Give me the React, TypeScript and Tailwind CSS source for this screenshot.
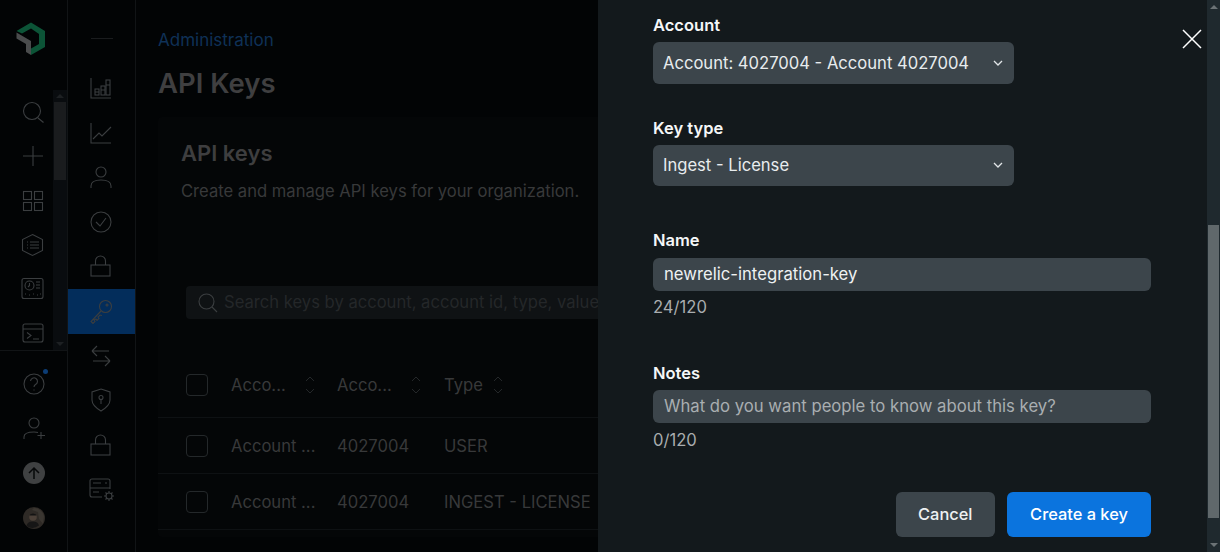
import React from "react";

const font = { fontFamily: "Inter, 'Liberation Sans', sans-serif" };

function Ico({ children, w = 28, h = 28 }: { children: React.ReactNode; w?: number; h?: number }) {
  return (
    <svg width={w} height={h} viewBox={`0 0 ${w} ${h}`} fill="none" stroke="currentColor" strokeWidth="1.1">
      {children}
    </svg>
  );
}

const railOne = [
  <Ico key="s"><circle cx="13" cy="13" r="8.500" /><path d="M19 20l5.500 4.500" /></Ico>,
  <Ico key="p"><path d="M14 4v20M4 14h20" /></Ico>,
  <Ico key="g"><rect x="4.500" y="4.500" width="8" height="8" /><rect x="15.500" y="4.500" width="8" height="8" /><rect x="4.500" y="15.500" width="8" height="8" /><rect x="15.500" y="15.500" width="8" height="8" /></Ico>,
  <Ico key="h"><path d="M13.500 3.500l10 5v11l-10 5-10-5v-11z" /><path d="M8 11h1M8 14h1M8 17h1M11 11h9M11 14h9M11 17h9" /></Ico>,
  <Ico key="d"><rect x="3" y="3.500" width="21" height="20" rx="2" /><circle cx="10.500" cy="10.500" r="4.500" /><path d="M10.500 8v2.500L9 12M17 7h4M17 10h4M17 13h4M6 19h1M10 20h1M14 19h1M18 20h1M21 19h1" /></Ico>,
  <Ico key="t"><rect x="4" y="4" width="20" height="18" rx="2" /><path d="M4 9h20M8 12.500l4 3-4 3M14 19h6" /></Ico>,
];

const railTwo = [
  <Ico key="b"><path d="M4 4v20h20" /><rect x="8" y="15" width="4" height="6" /><rect x="14" y="12" width="4" height="9" /><rect x="19" y="6" width="4" height="15" /><path d="M8 18h4M14 16h4M19 11h4" /></Ico>,
  <Ico key="l"><path d="M4 4v20h20M6 20l6-6 3 3 9-9" /></Ico>,
  <Ico key="u"><circle cx="14" cy="9" r="5" /><path d="M4 25v-2c0-4 4-6 10-6s10 2 10 6v2" /></Ico>,
  <Ico key="c"><circle cx="14" cy="14" r="10" /><path d="M9 14l4 4 6-8" /></Ico>,
  <Ico key="k"><rect x="4" y="13" width="19" height="11" /><path d="M8.500 13V9a5 5 0 0 1 10 0v4" /></Ico>,
];

const railTwoLow = [
  <Ico key="x"><path d="M5 9h17M5 9l5-5M5 9l5 5M23 19H6M23 19l-5-5M23 19l-5 5" /></Ico>,
  <Ico key="sh"><path d="M14 3l9 3v8c0 5-4 8-9 11-5-3-9-6-9-11V6z" /><circle cx="14" cy="11.500" r="2" /><path d="M14 13v5" /></Ico>,
  <Ico key="k2"><rect x="4" y="13" width="19" height="11" /><path d="M8.500 13V9a5 5 0 0 1 10 0v4" /></Ico>,
  <Ico key="sv"><path d="M15 22H5a2 2 0 0 1-2-2V6a2 2 0 0 1 2-2h16a2 2 0 0 1 2 2v8M3 13h20M6 8h8M18 8h2M6 17h6" /><circle cx="22" cy="21" r="3" /><path d="M22 16v2M22 24v2M17 21h2M25 21h2M18.500 17.500l1.500 1.500M24 23l1.500 1.500M18.500 24.500L20 23M24 19l1.500-1.500" /></Ico>,
];

function Sort() {
  return (
    <svg width="12" height="20" viewBox="0 0 12 20" fill="none" stroke="currentColor" strokeWidth="1">
      <path d="M2 6l4-4 4 4M2 14l4 4 4-4" />
    </svg>
  );
}

function Chevron() {
  return (
    <svg width="10" height="6" viewBox="0 0 10 6" fill="none" stroke="#e2e6e8" strokeWidth="1.3">
      <path d="M1 1l4 4 4-4" />
    </svg>
  );
}

function Check() {
  return <div className="h-[22px] w-[22px] rounded-[4px] border border-[#24282a]" />;
}

function Row({ a, b, c }: { a: string; b: string; c: string }) {
  return (
    <div className="grid h-[56px] grid-cols-[45px_106px_107px_1fr] items-center whitespace-nowrap border-b border-[#0e1113] pl-[28px] text-[16.6px] text-[#38393a]">
      <Check />
      <span className="pt-[2px]">{a}</span>
      <span className="pt-[2px]">{b}</span>
      <span className="pt-[2px]">{c}</span>
    </div>
  );
}

function Field({ label, className, children }: { label: string; className: string; children: React.ReactNode }) {
  return (
    <div className={className}>
      <div className="text-[16.5px] font-semibold leading-[20px] text-[#f5f7f8]">{label}</div>
      {children}
    </div>
  );
}

function SelectBox({ value, className }: { value: string; className: string }) {
  return (
    <div className={`flex h-[41.500px] w-[361px] items-center justify-between rounded-[6px] bg-[#3c454b] pl-[10px] pr-[11px] text-[16.6px] text-[#e8ecee] ${className}`}>
      <span className="pt-[1px]">{value}</span>
      <Chevron />
    </div>
  );
}

export default function App() {
  return (
    <div style={font} className="flex h-[552px] w-[1220px] overflow-hidden bg-[#020405]">
      {/* first rail */}
      <aside className="flex h-full w-[68px] shrink-0 flex-col border-r border-[#111416] text-[#3b3e40]">
        <div className="flex h-[90px] items-start pl-[16px] pt-[22px]">
          <svg width="30" height="34" viewBox="0 0 30 34">
            <path d="M0.500 9L15 0.500 29 9v16L15 33v-6.500l8-4.500V12L15 6.500 6 11.500z" fill="#0c5437" />
            <path d="M0.500 10.500L15 19v14l-5-3V22L0.500 16.500z" fill="#4a4c4d" />
          </svg>
        </div>
        <div className="flex h-[261px] overflow-hidden border-b border-[#111416]">
          <div className="flex w-[53px] flex-col items-center pl-[13px]">
            {railOne.map((i) => (
              <div key={i.key} className="flex h-[44.300px] w-full shrink-0 items-center justify-center">{i}</div>
            ))}
          </div>
          <div className="flex w-[14px] flex-col bg-[#090c0f]">
            <div className="flex h-[12px] items-center justify-center">
              <div className="h-0 w-0 border-x-[4px] border-b-[4px] border-x-transparent border-b-[#1d2023]" />
            </div>
            <div className="mx-[1px] h-[78px] bg-[#1a1c1e]" />
            <div className="flex-1" />
            <div className="flex h-[12px] items-center justify-center">
              <div className="h-0 w-0 border-x-[4px] border-t-[4px] border-x-transparent border-t-[#1d2023]" />
            </div>
          </div>
        </div>
        <div className="flex flex-col items-center pt-[11px]">
          <div className="relative flex h-[44.500px] items-center justify-center">
            <Ico>
              <circle cx="14" cy="14" r="10" />
              <path d="M10.500 11a3.500 3.500 0 1 1 5 3.500c-1 .6-1.500 1.200-1.500 2.500M14 19.500v1" />
            </Ico>
            <span className="absolute right-[0px] top-[7px] h-[5px] w-[5px] rounded-full bg-[#0c3d75]" />
          </div>
          <div className="flex h-[44.500px] items-center justify-center">
            <Ico>
              <circle cx="14" cy="8" r="5" />
              <path d="M4 24v-2c0-3 4-5 10-5 2 0 3 .2 4 .6M21 17v7M17.500 20.500h7.500" />
            </Ico>
          </div>
          <div className="flex h-[44.500px] items-center justify-center">
            <div className="flex h-[22px] w-[22px] items-center justify-center rounded-full bg-[#3f4142]">
              <svg width="14" height="14" viewBox="0 0 14 14" fill="none" stroke="#060809" strokeWidth="1.500">
                <path d="M7 13V2M2 7l5-5 5 5" />
              </svg>
            </div>
          </div>
          <div className="flex h-[44.500px] items-center justify-center">
            <svg width="24" height="24" viewBox="0 0 24 24">
              <circle cx="12" cy="12" r="11" fill="#2e2a26" />
              <path d="M12 2a11 11 0 0 1 10 8l-1 8-4-5-1-7-6-2z" fill="#3a3631" />
              <circle cx="11" cy="11" r="3.800" fill="#4b4038" />
              <path d="M7.500 9.500c1-3 6-3 7 0" fill="#131313" />
              <path d="M4.500 20c1-4 4-4.500 6.500-4.500s5 .8 6 4A11 11 0 0 1 4.500 20z" fill="#161616" />
            </svg>
          </div>
        </div>
      </aside>

      {/* second rail */}
      <aside className="flex h-full w-[68px] shrink-0 flex-col items-stretch border-r border-[#111416] text-[#3b3e40]">
        <div className="flex h-[66px] items-center justify-center pt-[11px]">
          <div className="h-px w-[22px] bg-[#1a1c1e]" />
        </div>
        {railTwo.map((i) => (
          <div key={i.key} className="flex h-[44.500px] items-center justify-center pr-[1px]">{i}</div>
        ))}
        <div className="flex h-[45px] items-center justify-center bg-[#032d5b] pr-[1px]">
          <Ico>
            <circle cx="18.500" cy="9.500" r="6" />
            <circle cx="20" cy="8" r="1" />
            <path d="M14 14L4 24.500l2 2 2-2-1-1.500 2-1 1 1.500 2-2-1-1.500 2-2 2 .5" />
          </Ico>
        </div>
        {railTwoLow.map((i) => (
          <div key={i.key} className="flex h-[44.500px] items-center justify-center pr-[1px]">{i}</div>
        ))}
      </aside>

      {/* page */}
      <main className="min-w-0 flex-1 overflow-hidden pl-[22px]">
        <div className="pt-[31px] text-[17px] leading-[19px] text-[#0f3157]">Administration</div>
        <h1 className="mt-[16px] text-[27.500px] font-semibold leading-[34px] text-[#3f3f40]">API Keys</h1>
        <section className="mt-[17px] h-[420px] w-[600px] rounded-[4px] bg-[#040607]">
          <div className="pl-[23px] pt-[22px]">
            <h2 className="text-[22px] font-semibold leading-[28px] text-[#3e3e3f]">API keys</h2>
            <p className="mt-[14px] text-[16.6px] leading-[20px] text-[#38393a]">Create and manage API keys for your organization.</p>
          </div>
          <div className="ml-[28px] mt-[85px] flex h-[33px] items-center gap-[6px] whitespace-nowrap rounded-[4px] bg-[#0f1214] pl-[11px] text-[16.6px] text-[#242729]">
            <span className="text-[#3b3e40]">
              <Ico w={21} h={22}>
                <circle cx="9.500" cy="9.500" r="7.500" />
                <path d="M15 15l5 5" />
              </Ico>
            </span>
            <span>Search keys by account, account id, type, value</span>
          </div>
          <div className="mt-[44px] grid h-[55px] grid-cols-[45px_106px_107px_1fr] items-start whitespace-nowrap border-b border-[#0e1113] pl-[28px] text-[16.6px] text-[#38393a]">
            <div className="pt-[11px]"><Check /></div>
            <div className="flex items-center gap-[18px] pt-[12px] leading-[20px]">
              <span>Acco...</span>
              <span className="text-[#242729]"><Sort /></span>
            </div>
            <div className="flex items-center gap-[18px] pt-[12px] leading-[20px]">
              <span>Acco...</span>
              <span className="text-[#242729]"><Sort /></span>
            </div>
            <div className="flex items-center gap-[9px] pt-[12px] leading-[20px]">
              <span>Type</span>
              <span className="text-[#242729]"><Sort /></span>
            </div>
          </div>
          <Row a="Account ..." b="4027004" c="USER" />
          <Row a="Account ..." b="4027004" c="INGEST - LICENSE" />
        </section>
      </main>

      {/* drawer */}
      <div className="relative flex h-full w-[622px] shrink-0 bg-[#13191c]">
        <form className="min-w-0 flex-1 pl-[55px]">
          <Field label="Account" className="pt-[15px]">
            <SelectBox value="Account: 4027004 - Account 4027004" className="mt-[7px]" />
          </Field>
          <Field label="Key type" className="pt-[34px]">
            <SelectBox value="Ingest - License" className="mt-[7px]" />
          </Field>
          <Field label="Name" className="pt-[44px]">
            <div className="mt-[8px] flex h-[33px] w-[498px] items-center rounded-[6px] bg-[#3c454b] pl-[11px] pt-[1px] text-[16.7px] text-[#eef1f2]">newrelic-integration-key</div>
            <div className="mt-[6px] text-[16.6px] leading-[20px] text-[#a9adaf]">24/120</div>
          </Field>
          <Field label="Notes" className="pt-[46px]">
            <div className="mt-[7px] flex h-[33px] w-[498px] items-center rounded-[6px] bg-[#3c454b] pl-[11px] pt-[1px] text-[16.7px] text-[#a9aeb1]">What do you want people to know about this key?</div>
            <div className="mt-[7px] text-[16.6px] leading-[20px] text-[#a9adaf]">0/120</div>
          </Field>
          <div className="mt-[42px] flex w-[498px] justify-end gap-[12px]">
            <button type="button" className="h-[45px] w-[99.500px] rounded-[6px] bg-[#3c454b] text-[16.4px] font-medium text-[#eef1f2]">Cancel</button>
            <button type="button" className="h-[45px] w-[144px] rounded-[6px] bg-[#0b74de] text-[16.4px] font-medium text-white">Create a key</button>
          </div>
        </form>
        <button type="button" aria-label="Close" className="absolute left-[584px] top-[29px] text-white">
          <svg width="20" height="20" viewBox="0 0 20 20" fill="none" stroke="currentColor" strokeWidth="1.500">
            <path d="M1 1l18 18M19 1L1 19" />
          </svg>
        </button>
        <div className="flex h-full w-[13px] shrink-0 flex-col bg-[#1f292e]">
          <div className="flex h-[14px] items-center justify-center">
            <div className="h-0 w-0 border-x-[4px] border-b-[4px] border-x-transparent border-b-[#6b7275]" />
          </div>
          <div className="h-[211px]" />
          <div className="mx-[1px] h-[293px] bg-[#60686b]" />
          <div className="flex-1" />
          <div className="flex h-[14px] items-center justify-center">
            <div className="h-0 w-0 border-x-[4px] border-t-[4px] border-x-transparent border-t-[#6b7275]" />
          </div>
        </div>
      </div>
    </div>
  );
}
